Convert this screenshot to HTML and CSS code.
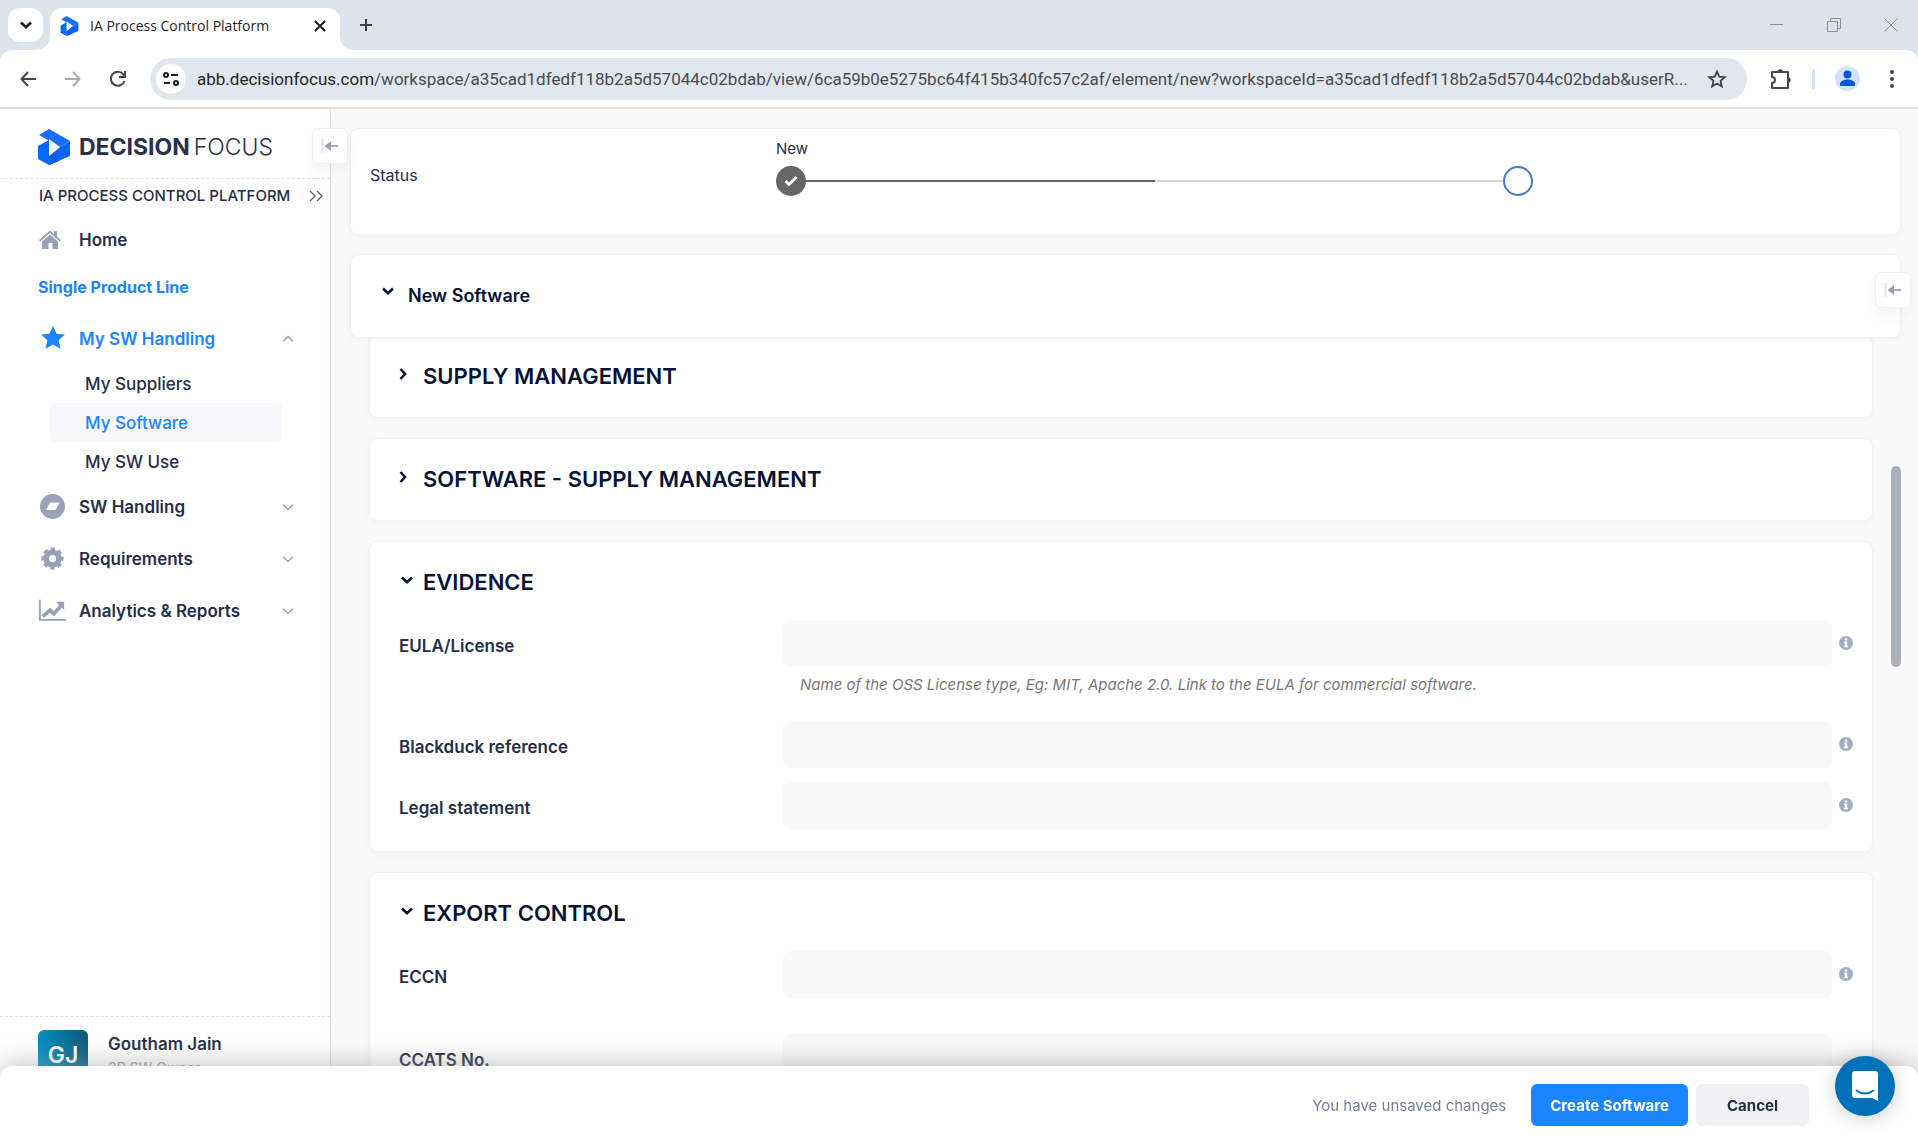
FILE: index.html
```html
<!DOCTYPE html>
<html lang="en">
<head>
<meta charset="utf-8">
<title>IA Process Control Platform</title>
<link rel="stylesheet" href="styles.css">
</head>
<body>
<svg class="defs" width="0" height="0" aria-hidden="true">
  <symbol id="logo" viewBox="0 0 32 36">
    <path fill="#1a6dff" d="M1 6 11 0l21 12-10 6z"/>
    <path fill="#0768fa" d="M0 17l11-6v25L0 30z"/>
    <path fill="#0a63fa" d="M32 12v15L11 36v-9l11-9z"/>
    <path fill="#0b5bea" d="M11 27l3-2 7 7-10 4z"/>
    <path fill="#fff" d="M11 10l11 8-11 9z"/>
  </symbol>
  <symbol id="down" viewBox="0 0 12 12"><path d="M1 3.500 6 8.200l5-4.700" fill="none" stroke="currentColor" stroke-width="2.600"/></symbol>
  <symbol id="right" viewBox="0 0 12 12"><path d="M3.500 1 8 6l-4.500 5" fill="none" stroke="currentColor" stroke-width="2.600"/></symbol>
  <symbol id="thin" viewBox="0 0 12 12"><path d="M1 3.500 6 8.500l5-5" fill="none" stroke="currentColor" stroke-width="1.500"/></symbol>
  <symbol id="info" viewBox="0 0 14 14"><circle cx="7" cy="7" r="7" fill="#a0adc3"/><path fill="#fff" d="M5.800 2.500h2.400v2H5.800zM5 5.600h3.200v4.200H9v1.400H5V9.800h.9V7H5z"/></symbol>
  <symbol id="collapse" viewBox="0 0 18 14"><path d="M1.500 0v14" stroke="#e1e3ea" stroke-width="2"/><path d="M9 7h8" stroke="#98a1b7" stroke-width="1.800"/><path d="M3.500 7 10 2v10z" fill="#98a1b7"/></symbol>
</svg>

<header class="browser">
  <div class="tabstrip">
    <button class="tab-search" aria-label="Search tabs"><svg width="12" height="12"><use href="#down"/></svg></button>
    <div class="tab">
      <svg width="19" height="20"><use href="#logo"/></svg>
      <span class="tab-title">IA Process Control Platform</span>
      <button class="plain" aria-label="Close tab"><svg width="12" height="12" viewBox="0 0 12 12"><path d="M1 1l10 10M11 1 1 11" stroke="#1f1f1f" stroke-width="2"/></svg></button>
    </div>
    <button class="plain new-tab" aria-label="New tab"><svg width="14" height="14" viewBox="0 0 14 14"><path d="M7 1v12M1 7h12" stroke="#3c3f43" stroke-width="2"/></svg></button>
    <div class="window-controls">
      <button class="plain" aria-label="Minimize"><svg width="14" height="14" viewBox="0 0 14 14"><path d="M0 6.500h13" stroke="#8a8e95"/></svg></button>
      <button class="plain" aria-label="Restore"><svg width="14" height="14" viewBox="0 0 14 14"><path d="M.5 3.500h10v10H.5zM3.500 3V.500h10v10H11" fill="none" stroke="#8a8e95"/></svg></button>
      <button class="plain" aria-label="Close"><svg width="14" height="14" viewBox="0 0 14 14"><path d="M.5.5l13 13M13.500.5l-13 13" stroke="#8a8e95"/></svg></button>
    </div>
  </div>
  <div class="toolbar">
    <button class="plain tool" aria-label="Back"><svg width="16" height="16" viewBox="0 0 16 16"><path d="M16 8H2M8 1 1.500 8 8 15" fill="none" stroke="#474747" stroke-width="2"/></svg></button>
    <button class="plain tool" aria-label="Forward"><svg width="16" height="16" viewBox="0 0 16 16"><path d="M0 8h14M8 1l6.500 7L8 15" fill="none" stroke="#ababab" stroke-width="2"/></svg></button>
    <button class="plain tool" aria-label="Reload"><svg width="18" height="18" viewBox="0 0 18 18"><path d="M15.500 11A7 7 0 1 1 14 4l2 2.500" fill="none" stroke="#474747" stroke-width="2"/><path d="M16 1v6h-6" fill="none" stroke="#474747" stroke-width="2"/></svg></button>
    <div class="omnibox">
      <button class="site-info" aria-label="Site information"><svg width="16" height="14" viewBox="0 0 16 14"><g fill="none" stroke="#202124" stroke-width="2"><circle cx="3" cy="3" r="2"/><path d="M8 3h7M1 11h6"/><circle cx="13" cy="11" r="2"/></g></svg></button>
      <span class="url"><b>abb.decisionfocus.com</b>/workspace/a35cad1dfedf118b2a5d57044c02bdab/view/6ca59b0e5275bc64f415b340fc57c2af/element/new?workspaceId=a35cad1dfedf118b2a5d57044c02bdab&amp;userR...</span>
      <button class="plain" aria-label="Bookmark this tab"><svg width="20" height="20" viewBox="0 0 20 20"><path d="M10 2.500l2.200 5.200 5.600.5-4.300 3.700 1.300 5.500-4.800-2.900-4.800 2.900 1.300-5.500-4.300-3.700 5.600-.5z" fill="none" stroke="#3c3f43" stroke-width="1.800"/></svg></button>
    </div>
    <button class="plain ext" aria-label="Extensions"><svg width="22" height="22" viewBox="0 0 22 22"><path d="M2 4h16v16H2v-5a3 3 0 0 0 0-6z" fill="none" stroke="#474747" stroke-width="2" stroke-linejoin="round"/><path d="M7.500 4a2.700 2.700 0 0 1 5.400 0zM18 9.300a2.700 2.700 0 0 1 0 5.400z" fill="#474747"/></svg></button>
    <span class="divider"></span>
    <button class="plain" aria-label="Profile"><svg width="25" height="25" viewBox="0 0 25 25"><circle cx="12.500" cy="12.500" r="12.500" fill="#d3e3fd"/><circle cx="12.500" cy="8.500" r="4" fill="#0b57d0"/><path d="M5 20v-2c0-3 4-4.500 7.500-4.500S20 15 20 18v2z" fill="#0b57d0"/></svg></button>
    <button class="plain menu" aria-label="Menu"><svg width="4" height="18" viewBox="0 0 4 18"><g fill="#474747"><circle cx="2" cy="2" r="2"/><circle cx="2" cy="9" r="2"/><circle cx="2" cy="16" r="2"/></g></svg></button>
  </div>
</header>

<div class="app">
  <aside class="sidebar">
    <div class="brand">
      <svg width="32" height="36"><use href="#logo"/></svg>
      <span class="brand-name"><b>DECISION</b><span>FOCUS</span></span>
    </div>
    <button class="collapse collapse-left" aria-label="Collapse sidebar"><svg width="18" height="14"><use href="#collapse"/></svg></button>
    <div class="platform">
      <span>IA PROCESS CONTROL PLATFORM</span>
      <svg width="14" height="12" viewBox="0 0 14 12"><path d="M1 1l5 5-5 5M8 1l5 5-5 5" fill="none" stroke="#555c6e" stroke-width="1.300"/></svg>
    </div>
    <nav class="nav">
      <a class="item" href="#home">
        <svg width="28" height="20" viewBox="0 0 28 20"><g fill="#99a1b7"><path d="M1 10 12 .5l4 3.400V1h3v5.500l4 3.500-1.200 1.400L12 3 2.200 11.400z"/><path d="M4 11.500 12 4.600l8 6.900V19h-5.500v-6h-4v6H4z"/></g></svg>
        <span>Home</span>
      </a>
      <div class="group">Single Product Line</div>
      <a class="item active" href="#my-sw">
        <svg width="28" height="26" viewBox="0 0 28 26"><path fill="#1b84ff" d="M15 0l3.600 7.700 8.300.8-6.300 5.700 1.900 8.600-7.500-4.400-7.500 4.400 1.900-8.600L3.100 8.500l8.300-.8z"/></svg>
        <span>My SW Handling</span>
        <svg class="chev up" width="12" height="12"><use href="#thin"/></svg>
      </a>
      <div class="subs">
        <a class="sub" href="#suppliers">My Suppliers</a>
        <a class="sub selected" href="#software">My Software</a>
        <a class="sub" href="#use">My SW Use</a>
      </div>
      <a class="item" href="#sw">
        <svg width="28" height="26" viewBox="0 0 28 26"><circle cx="14.500" cy="12.500" r="12.500" fill="#99a1b7"/><path fill="#fff" d="M12 8.500h9.500l-4 7.500H8z"/></svg>
        <span>SW Handling</span>
        <svg class="chev" width="12" height="12"><use href="#thin"/></svg>
      </a>
      <a class="item" href="#requirements">
        <svg width="28" height="26" viewBox="0 0 28 26"><circle cx="14.500" cy="12.500" r="6.300" fill="none" stroke="#99a1b7" stroke-width="5.500"/><circle cx="14.500" cy="12.500" r="9.700" fill="none" stroke="#99a1b7" stroke-width="2.800" stroke-dasharray="4.400 3.218" stroke-dashoffset="2.200"/></svg>
        <span>Requirements</span>
        <svg class="chev" width="12" height="12"><use href="#thin"/></svg>
      </a>
      <a class="item" href="#analytics">
        <svg width="30" height="24" viewBox="0 0 30 24"><path d="M2 0v21.500h28" fill="none" stroke="#99a1b7" stroke-width="2"/><path d="M5 18l8-7 4 4 8-9" fill="none" stroke="#99a1b7" stroke-width="4"/><path d="M19 2h9v9z" fill="#99a1b7"/></svg>
        <span>Analytics &amp; Reports</span>
        <svg class="chev" width="12" height="12"><use href="#thin"/></svg>
      </a>
    </nav>
    <div class="profile">
      <span class="avatar">GJ</span>
      <div><div class="name">Goutham Jain</div><div class="role">3P SW Owner</div></div>
    </div>
  </aside>

  <main class="main">
    <section class="card status">
      <span class="status-label">Status</span>
      <div class="stepper">
        <span class="step-name">New</span>
        <div class="track">
          <span class="step done"><svg width="14" height="12" viewBox="0 0 14 12"><path d="M1.500 6l3.500 3.500L12.500 2" fill="none" stroke="#fff" stroke-width="3"/></svg></span>
          <span class="line filled"></span><span class="line"></span>
          <span class="step"></span>
        </div>
      </div>
    </section>
    <section class="card form-head">
      <button class="toggle"><svg width="12" height="12"><use href="#down"/></svg><span>New Software</span></button>
      <button class="collapse collapse-right" aria-label="Expand panel"><svg width="18" height="14"><use href="#collapse"/></svg></button>
    </section>

    <form class="sections">
      <section class="card">
        <h2><button type="button" class="heading"><svg width="12" height="12"><use href="#right"/></svg>SUPPLY MANAGEMENT</button></h2>
      </section>
      <section class="card">
        <h2><button type="button" class="heading"><svg width="12" height="12"><use href="#right"/></svg>SOFTWARE - SUPPLY MANAGEMENT</button></h2>
      </section>
      <section class="card open">
        <h2><button type="button" class="heading expanded"><svg width="12" height="12"><use href="#down"/></svg>EVIDENCE</button></h2>
        <div class="fields">
          <div class="field"><label for="eula">EULA/License</label><input id="eula" type="text"><svg width="14" height="14"><use href="#info"/></svg>
            <p class="help">Name of the OSS License type, Eg: MIT, Apache 2.0. Link to the EULA for commercial software.</p></div>
          <div class="field"><label for="blackduck">Blackduck reference</label><input id="blackduck" type="text"><svg width="14" height="14"><use href="#info"/></svg></div>
          <div class="field"><label for="legal">Legal statement</label><input id="legal" type="text"><svg width="14" height="14"><use href="#info"/></svg></div>
        </div>
      </section>
      <section class="card open">
        <h2><button type="button" class="heading expanded"><svg width="12" height="12"><use href="#down"/></svg>EXPORT CONTROL</button></h2>
        <div class="fields spaced">
          <div class="field"><label for="eccn">ECCN</label><input id="eccn" type="text"><svg width="14" height="14"><use href="#info"/></svg></div>
          <div class="field"><label for="ccats">CCATS No.</label><input id="ccats" type="text"></div>
        </div>
      </section>
    </form>
    <span class="scroll-thumb"></span>
  </main>
</div>

<footer class="actions">
  <span class="unsaved">You have unsaved changes</span>
  <button class="btn primary">Create Software</button>
  <button class="btn">Cancel</button>
</footer>
<button class="chat" aria-label="Open chat"><svg width="28" height="32" viewBox="0 0 28 32"><path fill="#fff" d="M4 1h20a3 3 0 0 1 3 3v27l-6-3H4a3 3 0 0 1-3-3V4a3 3 0 0 1 3-3z"/><path d="M5.500 20.500c5 4 12 4 17 0" fill="none" stroke="#0071b8" stroke-width="1.800" stroke-linecap="round"/></svg></button>
</body>
</html>
```
FILE: styles.css
```css
* { box-sizing: border-box; }

body {
  margin: 0;
  height: 100vh;
  display: flex;
  flex-direction: column;
  overflow: hidden;
  background: #fafafa;
  color: #252f4a;
  font-family: Inter, "Liberation Sans", sans-serif;
  font-size: 16px;
}

.defs { position: absolute; }
svg { flex: none; display: block; }
a { color: inherit; text-decoration: none; }

button {
  font: inherit;
  color: inherit;
  border: 0;
  padding: 0;
  background: none;
  display: flex;
  align-items: center;
  justify-content: center;
}

/* Browser frame */
.browser {
  flex: none;
  background: #dee2ea;
  border-bottom: 2px solid #dddddd;
  font-family: "Open Sans", "Noto Sans", sans-serif;
}

.tabstrip {
  display: flex;
  align-items: center;
  height: 50px;
  padding: 0 20px 0 8px;
}

.tab-search {
  width: 35px;
  height: 34px;
  margin-right: 7px;
  border-radius: 12px;
  background: #fff;
  color: #1f1f1f;
}

.tab {
  position: relative;
  align-self: flex-end;
  display: flex;
  align-items: center;
  width: 290px;
  height: 42px;
  padding: 0 14px 7px 10px;
  gap: 11px;
  border-radius: 12px 12px 0 0;
  background: #fff;
}

.tab::before,
.tab::after {
  content: "";
  position: absolute;
  bottom: 0;
  width: 12px;
  height: 12px;
}

.tab::before {
  right: 100%;
  background: radial-gradient(circle at 0 0, transparent 11px, #fff 12px);
}

.tab::after {
  left: 100%;
  background: radial-gradient(circle at 100% 0, transparent 11px, #fff 12px);
}

.tab-title {
  flex: 1;
  font-size: 14px;
  color: #1f1f1f;
  white-space: nowrap;
}

.new-tab { margin-left: 19px; }

.window-controls {
  display: flex;
  gap: 43px;
  margin-left: auto;
}

.toolbar {
  display: flex;
  align-items: center;
  height: 57px;
  padding: 0 24px 0 20px;
  border-radius: 12px 12px 0 0;
  background: #fff;
}

.tool { margin-right: 29px; }
.tool + .tool { margin-right: 28px; }

.omnibox {
  flex: 1;
  min-width: 0;
  display: flex;
  align-items: center;
  height: 42px;
  margin-right: 23px;
  margin-left: -5px;
  padding: 0 20px 0 6px;
  border-radius: 21px;
  background: #e2e7ee;
}

.site-info {
  flex: none;
  width: 30px;
  height: 30px;
  border-radius: 50%;
  background: #fff;
}

.url {
  flex: 1;
  min-width: 0;
  overflow: hidden;
  margin: 0 16px 0 11px;
  font-family: Roboto, "Noto Sans", sans-serif;
  font-size: 17px;
  color: #474b50;
  white-space: nowrap;
}

.url b {
  font-weight: 400;
  color: #1f1f1f;
}

.divider {
  width: 3px;
  height: 20px;
  margin: 0 20px;
  background: #d3e3fd;
}

.menu { margin-left: 30px; }

/* Application */
.app {
  flex: 1;
  min-height: 0;
  display: grid;
  grid-template-columns: 331px minmax(0, 1fr);
}

.sidebar {
  position: relative;
  z-index: 2;
  display: flex;
  flex-direction: column;
  min-height: 0;
  border-right: 1px solid #dbdfe9;
  background: #fff;
}

.brand {
  display: flex;
  align-items: center;
  gap: 9px;
  height: 70px;
  padding: 6px 0 0 38px;
  border-bottom: 1px dashed #dbdfe9;
}

.brand-name {
  display: flex;
  gap: 4px;
  font-size: 23px;
  color: #29304d;
}

.brand-name span { font-weight: 300; }

.collapse {
  position: absolute;
  z-index: 3;
  width: 36px;
  height: 36px;
  border: 1px solid #f1f1f4;
  border-radius: 6px;
  background: #fff;
  box-shadow: 0 8px 14px rgba(0, 0, 0, 0.04);
}

.collapse-left { top: 19px; right: -18px; }
.collapse-right { top: 17px; right: -11px; }

.platform {
  display: flex;
  align-items: center;
  justify-content: space-between;
  height: 35px;
  padding: 0 7px 2px 39px;
  font-weight: 500;
  font-size: 15px;
}

.nav {
  flex: 1;
  min-height: 0;
  display: flex;
  flex-direction: column;
}

.item {
  display: flex;
  align-items: center;
  height: 52px;
  padding: 0 36px 0 38px;
  font-size: 17px;
  font-weight: 600;
}

.item span { flex: 1; margin-left: 13px; }
.item svg:first-child { width: 28px; overflow: visible; }
.chev { color: #99a1b7; }
.up { transform: rotate(180deg); }
.active { color: #1b84ff; }

.group {
  height: 47px;
  padding-left: 38px;
  color: #1b84ff;
  font-weight: 700;
  line-height: 42px;
}

.subs {
  display: grid;
  grid-template-rows: 38px 39px 39px;
}

.sub {
  display: flex;
  align-items: center;
  margin: 0 48px 0 50px;
  padding-left: 35px;
  border-radius: 6px;
  font-size: 17px;
  font-weight: 500;
}

.selected {
  background: #f7f8fc;
  color: #1b84ff;
}

.profile {
  flex: none;
  display: flex;
  gap: 20px;
  height: 124px;
  padding: 13px 0 0 38px;
  border-top: 1px dashed #dbdfe9;
}

.avatar {
  width: 50px;
  height: 50px;
  border-radius: 6px;
  background: linear-gradient(80deg, #0596cf, #0b5a78);
  color: #fff;
  font-size: 23px;
  font-weight: 600;
  line-height: 50px;
  text-align: center;
}

.name {
  font-size: 17px;
  font-weight: 600;
  line-height: 28px;
}

.role {
  color: #99a1b7;
  font-size: 14px;
  line-height: 20px;
}

/* Main column */
.main {
  position: relative;
  padding: 19px 17px 0 19px;
  overflow: hidden;
}

.card {
  border: 1px solid #f1f1f1;
  border-radius: 8px;
  background: #fff;
  box-shadow: 0 3px 6px rgba(0, 0, 0, 0.03);
}

.status {
  display: flex;
  height: 107px;
  padding: 0 19px;
  margin-bottom: 19px;
}

.status-label {
  width: 406px;
  line-height: 93px;
}

.stepper {
  flex: 0 1 757px;
  padding-top: 8px;
}

.step-name {
  display: block;
  width: 30px;
  font-size: 15px;
  line-height: 24px;
  white-space: nowrap;
}

.track {
  display: flex;
  align-items: center;
  padding-top: 5px;
}

.step {
  flex: none;
  width: 30px;
  height: 30px;
  border: 2px solid #4577cc;
  border-radius: 50%;
}

.done {
  display: flex;
  align-items: center;
  justify-content: center;
  border-color: #666;
  background: #666;
}

.line {
  flex: 1;
  height: 2px;
  background: #d4d4d4;
}

.filled { background: #666; }

.form-head {
  position: relative;
  z-index: 1;
  display: flex;
  height: 84px;
  padding: 0 31px;
  color: #071437;
}

.toggle {
  gap: 14px;
  padding-bottom: 1px;
  font-size: 18px;
  font-weight: 600;
}

.toggle svg { margin-bottom: 9px; }

.sections {
  display: flex;
  flex-direction: column;
  gap: 20px;
  margin: -3px 28px 0 19px;
}

h2 {
  margin: 0;
  font-size: 22px;
  font-weight: 600;
  color: #071437;
}

.heading {
  height: 81px;
  padding-bottom: 1px;
  padding-left: 27px;
  gap: 14px;
}

.heading svg { margin-bottom: 4px; }

.expanded {
  padding-left: 31px;
  gap: 10px;
}

.open .heading { margin-bottom: -3px; }

.fields {
  display: flex;
  flex-direction: column;
  gap: 14px;
  padding: 0 19px 22px 29px;
}

.spaced { gap: 36px; }

.field {
  display: grid;
  grid-template-columns: 377px minmax(0, 1fr) 14px;
  column-gap: 7px;
  align-items: center;
}

.field label {
  padding-top: 4px;
  font-size: 17px;
  font-weight: 600;
}

.field > svg { margin-bottom: 2px; }

.field input {
  width: 100%;
  height: 47px;
  margin: 0;
  padding: 0 17px;
  border: 0;
  border-radius: 8px;
  background: #f9f9f9;
  font: inherit;
}

.help {
  grid-column: 2;
  margin: 0;
  padding: 5px 17px 9px;
  color: #777;
  font-size: 15px;
  font-style: italic;
  line-height: 26px;
}

.scroll-thumb {
  position: absolute;
  top: 357px;
  right: 17px;
  width: 10px;
  height: 201px;
  border-radius: 5px;
  background: #abb0bb;
}

/* Bottom bar */
.actions {
  position: fixed;
  right: 0;
  bottom: 0;
  left: 0;
  z-index: 5;
  display: flex;
  align-items: center;
  justify-content: flex-end;
  gap: 8px;
  height: 74px;
  padding: 4px 109px 0 20px;
  border-radius: 12px 12px 0 0;
  background: #fff;
  box-shadow: 0 -2px 26px rgba(155, 148, 148, 0.6);
}

.unsaved {
  margin-right: 17px;
  color: #78829d;
  font-size: 15px;
}

.btn {
  height: 42px;
  padding: 0 31px;
  border-radius: 6px;
  background: #f1f1f4;
  color: #252f4a;
  font-size: 15px;
  font-weight: 700;
}

.primary {
  padding: 0 19px;
  background: #1b84ff;
  color: #fff;
}

.chat {
  position: fixed;
  right: 23px;
  bottom: 24px;
  z-index: 6;
  width: 60px;
  height: 60px;
  border-radius: 50%;
  background: #0071b8;
  box-shadow: 0 2px 20px rgba(0, 0, 0, 0.2);
}
```
